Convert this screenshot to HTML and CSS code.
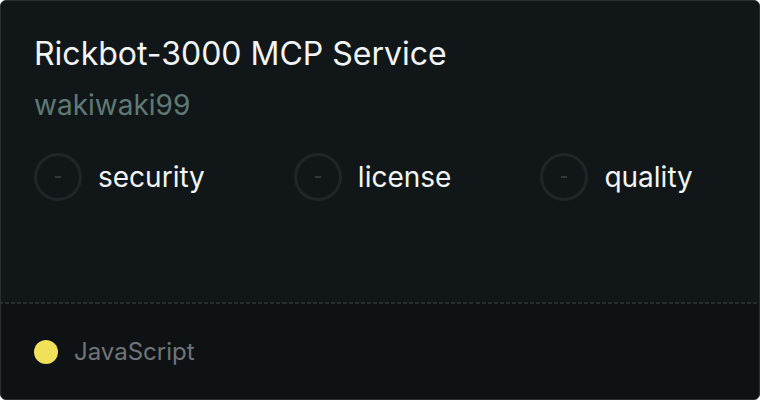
FILE: index.html
```html
<!DOCTYPE html>
<html>
<head>
<meta charset="utf-8">
<link rel="stylesheet" href="styles.css">
</head>
<body>
<div class="card">
  <div class="main">
    <h1 class="title">Rickbot-3000 MCP Service</h1>
    <div class="author">wakiwaki99</div>
    <div class="scores">
      <div class="score"><span class="ring"><span class="dash"></span></span><span class="label">security</span></div>
      <div class="score"><span class="ring"><span class="dash"></span></span><span class="label">license</span></div>
      <div class="score"><span class="ring"><span class="dash"></span></span><span class="label">quality</span></div>
    </div>
  </div>
  <div class="footer">
    <span class="lang-dot"></span>
    <span class="lang">JavaScript</span>
  </div>
</div>
</body>
</html>
```

FILE: styles.css
```css
html, body {
  margin: 0;
  padding: 0;
  background: #ffffff;
}
body {
  width: 760px;
  height: 400px;
  font-family: Inter, "Noto Sans", sans-serif;
}
.card {
  box-sizing: border-box;
  width: 760px;
  height: 400px;
  border: 1px solid #2a2f33;
  border-radius: 6px;
  overflow: hidden;
  display: flex;
  flex-direction: column;
  background: #111719;
}
.main {
  height: 301px;
  flex: none;
  box-sizing: border-box;
  padding: 33px 0 0 33px;
  background: #111719;
}
.title {
  margin: 0;
  font-size: 32px;
  font-weight: 400;
  line-height: 40px;
  color: #f2f4f5;
}
.author {
  margin-top: 14px;
  font-size: 28px;
  line-height: 34px;
  color: #5f7a76;
}
.scores {
  display: flex;
  gap: 89px;
  margin-top: 31px;
}
.score {
  display: flex;
  align-items: center;
  gap: 16px;
}
.ring {
  box-sizing: border-box;
  width: 48px;
  height: 48px;
  border: 3px solid #1f2528;
  border-radius: 50%;
  display: flex;
  align-items: center;
  justify-content: center;
}
.dash {
  width: 6px;
  height: 2px;
  background: #32393c;
}
.label {
  font-size: 28px;
  line-height: 34px;
  color: #f2f4f5;
}
.footer {
  flex: 1;
  border-top: 2px solid transparent;
  border-image: repeating-linear-gradient(90deg, #262d30 0 4px, transparent 4px 6px) 2;
  background: #0e1215;
  display: flex;
  align-items: center;
  padding-left: 33px;
  gap: 16px;
}
.lang-dot {
  width: 24px;
  height: 24px;
  border-radius: 50%;
  background: #f1e05a;
}
.lang {
  font-size: 24px;
  color: #6f7579;
}
```
